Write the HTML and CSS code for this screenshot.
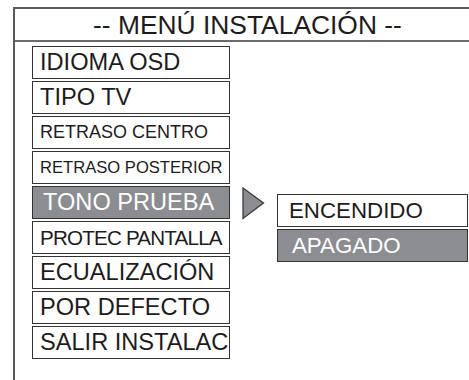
FILE: index.html
```html
<!DOCTYPE html>
<html lang="es">
<head>
  <meta charset="UTF-8">
  <title>Menú Instalación</title>
  <link rel="stylesheet" href="styles.css">
</head>
<body>
  <div class="frame">
    <div class="title">-- MENÚ INSTALACIÓN --</div>

    <div class="content">
      <div class="menu">
        <div class="item big">IDIOMA OSD</div>
        <div class="item big">TIPO TV</div>
        <div class="item mid">RETRASO CENTRO</div>
        <div class="item small">RETRASO POSTERIOR</div>
        <div class="item big active">TONO PRUEBA</div>
        <div class="item narrow">PROTEC PANTALLA</div>
        <div class="item big">ECUALIZACIÓN</div>
        <div class="item big">POR DEFECTO</div>
        <div class="item big">SALIR INSTALAC</div>
      </div>

      <svg class="arrow" width="23" height="33" viewBox="0 0 23 33">
        <polygon points="1,1 21.5,16 1,31.5" fill="#8c8d90" stroke="#3a3a3a" stroke-width="1.3" stroke-linejoin="miter"/>
      </svg>

      <div class="submenu">
        <div class="item sub">ENCENDIDO</div>
        <div class="item sub active">APAGADO</div>
      </div>
    </div>
  </div>
</body>
</html>
```

FILE: styles.css
```css
body {
  margin: 0;
  background-color: #fff;
  font-family: "Liberation Sans", Arial, sans-serif;
  color: #1e1b1c;
  overflow: hidden;
}
.frame {
  box-sizing: border-box;
  margin: 7px 0 0 13px;
  width: 456px;
  height: 373px;
  border-top: 2px solid #5a5a5a;
  border-left: 2px solid #5a5a5a;
}
.title {
  height: 31px;
  line-height: 33px;
  border-bottom: 2px solid #6a6a6a;
  padding-left: 78px;
  font-size: 26.4px;
  white-space: nowrap;
}
.content {
  display: flex;
  align-items: flex-start;
  padding: 4px 0 0 17px;
}
.menu {
  display: flex;
  flex-direction: column;
  gap: 2px;
}
.item {
  box-sizing: border-box;
  width: 198px;
  height: 33px;
  border: 1px solid #333;
  padding-left: 7px;
  line-height: 31px;
  white-space: nowrap;
  background-color: #fff;
}
.item.big {
  font-size: 23.6px;
}
.item.mid {
  font-size: 18px;
}
.item.small {
  font-size: 16.6px;
}
.item.narrow {
  font-size: 20.6px;
  letter-spacing: -0.8px;
}
.item.active {
  background-color: #8c8d90;
  color: #fff;
  padding-left: 10px;
}
.arrow {
  margin: 141px 0 0 12px;
}
.submenu {
  display: flex;
  flex-direction: column;
  gap: 2px;
  margin: 148px 0 0 12px;
}
.item.sub {
  width: 191px;
  font-size: 22.3px;
  padding-left: 11px;
}
.item.sub.active {
  padding-left: 14px;
}
```
